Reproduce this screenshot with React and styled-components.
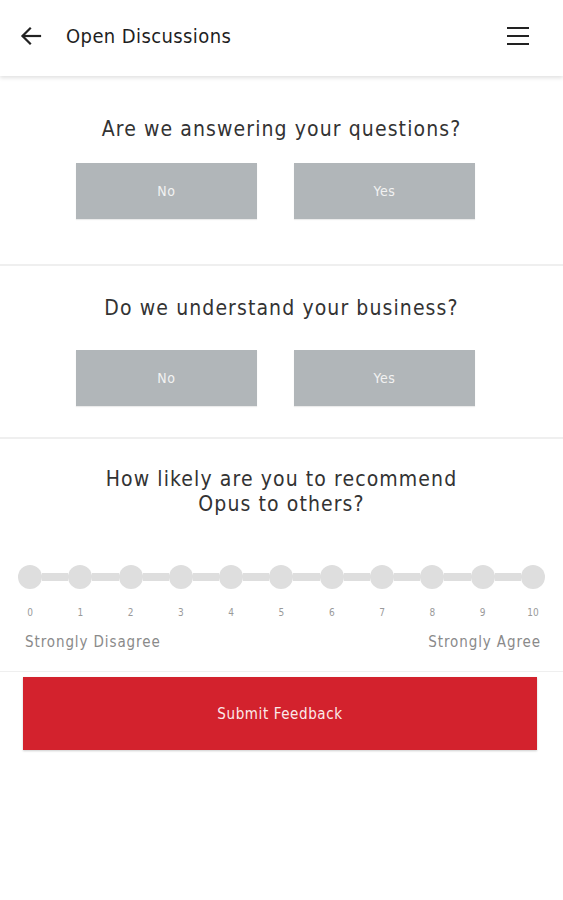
import React, { useState } from "react";
import styled, { createGlobalStyle } from "styled-components";

const GlobalStyle = createGlobalStyle`
  body {
    margin: 0;
    background: #ffffff;
    font-family: "DejaVu Sans Condensed", "Liberation Sans Narrow", "DejaVu Sans", sans-serif;
  }
`;

const questions = [
  { id: "answering", title: "Are we answering your questions?", pad: "37px 0 45px", gap: 18 },
  { id: "business", title: "Do we understand your business?", pad: "28px 0 31px", gap: 26 },
];

const scale = [0, 1, 2, 3, 4, 5, 6, 7, 8, 9, 10];

export default function App() {
  const [answers, setAnswers] = useState({});
  const [score, setScore] = useState(null);

  return (
    <Page>
      <GlobalStyle />
      <Header>
        <IconButton aria-label="Back">
          <svg width="24" height="24" viewBox="0 0 24 24" fill="none" stroke="#222" strokeWidth="2.2" strokeLinecap="square">
            <path d="M21 12H4" />
            <path d="M11 4.5L3.5 12L11 19.5" />
          </svg>
        </IconButton>
        <Title>Open Discussions</Title>
        <Spacer />
        <IconButton aria-label="Menu">
          <svg width="24" height="24" viewBox="0 0 24 24" fill="none" stroke="#222" strokeWidth="2">
            <path d="M1 4H23" />
            <path d="M1 12H23" />
            <path d="M1 20H23" />
          </svg>
        </IconButton>
      </Header>

      {questions.map((q) => (
        <React.Fragment key={q.id}>
          <Section $pad={q.pad} $gap={q.gap}>
            <Question>{q.title}</Question>
            <Choices>
              {["No", "Yes"].map((c) => (
                <Choice
                  key={c}
                  $active={answers[q.id] === c}
                  onClick={() => setAnswers({ ...answers, [q.id]: c })}
                >
                  {c}
                </Choice>
              ))}
            </Choices>
          </Section>
          <Divider />
        </React.Fragment>
      ))}

      <Section $pad="26px 0 0" $gap={0}>
        <Question>
          How likely are you to recommend
          <br />
          Opus to others?
        </Question>
        <Slider>
          <Track>
            {scale.map((n) => (
              <React.Fragment key={n}>
                {n > 0 && <Segment />}
                <Dot $active={score === n} onClick={() => setScore(n)} />
              </React.Fragment>
            ))}
          </Track>
          <Numbers>
            {scale.map((n) => (
              <Num key={n}>{n}</Num>
            ))}
          </Numbers>
          <Ends>
            <span>Strongly Disagree</span>
            <span>Strongly Agree</span>
          </Ends>
        </Slider>
      </Section>
      <Divider $thin />

      <Submit>Submit Feedback</Submit>
    </Page>
  );
}

const Page = styled.div`
  width: 563px;
  min-height: 900px;
  background: #fff;
`;

const Header = styled.header`
  height: 76px;
  box-sizing: border-box;
  display: flex;
  align-items: center;
  padding: 0 33px 5px 19px;
  background: #fff;
  box-shadow: 0 2px 4px rgba(0, 0, 0, 0.12);
  position: relative;
  z-index: 1;
  margin-bottom: 2px;
`;

const IconButton = styled.button`
  border: 0;
  background: none;
  padding: 0;
  width: 24px;
  height: 24px;
  display: flex;
  align-items: center;
  justify-content: center;
  cursor: pointer;
`;

const Title = styled.h1`
  margin: 0 0 0 23px;
  font-size: 20px;
  font-weight: 400;
  color: #1f1f1f;
  letter-spacing: 0.4px;
`;

const Spacer = styled.div`
  flex: 1;
`;

const Section = styled.section`
  display: flex;
  flex-direction: column;
  align-items: center;
  gap: ${(p) => p.$gap}px;
  padding: ${(p) => p.$pad};
`;

const Question = styled.h2`
  margin: 0;
  font-size: 21px;
  line-height: 25px;
  padding: 2px 0 3px;
  font-weight: 400;
  color: #333;
  text-align: center;
  letter-spacing: 1.1px;
`;

const Choices = styled.div`
  display: flex;
  gap: 37px;
  margin-right: 12px;
`;

const Choice = styled.button`
  width: 181px;
  height: 56px;
  border: 0;
  background: ${(p) => (p.$active ? "#8e9498" : "#b1b6b9")};
  color: #f2f2f2;
  font-family: inherit;
  font-size: 14px;
  letter-spacing: 0.6px;
  box-shadow: 0 1px 1px rgba(0, 0, 0, 0.08);
  cursor: pointer;
`;

const Divider = styled.hr`
  margin: 0;
  border: 0;
  height: ${(p) => (p.$thin ? 1 : 2)}px;
  background: #efefef;
`;

const Slider = styled.div`
  align-self: stretch;
  display: flex;
  flex-direction: column;
  padding: 45px 18px 19px 18px;
`;

const Track = styled.div`
  display: flex;
  align-items: center;
  height: 24px;
`;

const Segment = styled.div`
  flex: 1;
  height: 8px;
  background: #dedede;
`;

const Dot = styled.div`
  width: 24px;
  height: 24px;
  border-radius: 50%;
  background: ${(p) => (p.$active ? "#d3222d" : "#dedede")};
  cursor: pointer;
  flex-shrink: 0;
`;

const Numbers = styled.div`
  display: flex;
  justify-content: space-between;
  margin-top: 17px;
`;

const Num = styled.span`
  width: 24px;
  text-align: center;
  font-size: 10px;
  line-height: 14px;
  color: #9a9a9a;
`;

const Ends = styled.div`
  display: flex;
  justify-content: space-between;
  margin-top: 12px;
  padding: 0 4px 0 7px;
  font-size: 15px;
  line-height: 20px;
  color: #8a8a8a;
  letter-spacing: 0.9px;
`;

const Submit = styled.button`
  display: block;
  margin: 5px 0 0 23px;
  width: 514px;
  height: 73px;
  border: 0;
  background: #d3222d;
  color: #fbeaea;
  font-family: inherit;
  font-size: 15px;
  letter-spacing: 0.6px;
  box-shadow: 0 1px 2px rgba(0, 0, 0, 0.2);
  cursor: pointer;
`;
